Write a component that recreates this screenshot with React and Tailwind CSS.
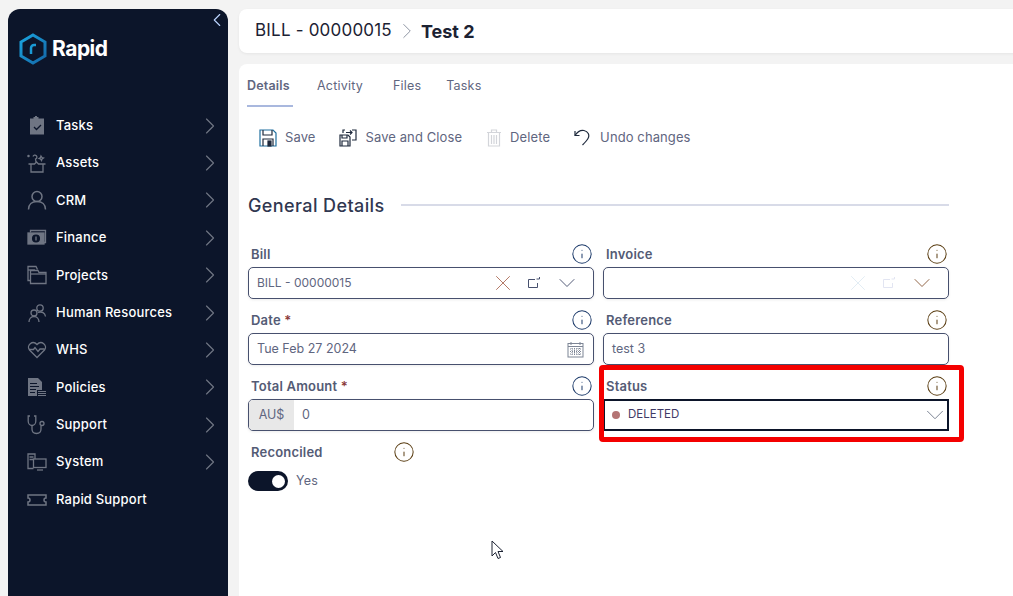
import { ChevronRight, ChevronLeft, ChevronDown, X, Info } from "lucide-react"

const FONT = "font-['Inter','Open_Sans',sans-serif]"

// sidebar icons, all drawn on a 20x20 box
const stroke = { fill: "none", stroke: "#6f7583", strokeWidth: 1.3 }
const icons = {
  tasks: (
    <svg width="20" height="20" viewBox="0 0 20 20">
      <path d="M3 3h3.5V1.5h1.5V0.5h2V1.5h1.5V3H17V19H3Z" fill="#6f7583" transform="translate(0 -0.5)" />
      <path d="M7 11l2.5 2.5L14 9" fill="none" stroke="#0c152a" strokeWidth="1.3" />
    </svg>
  ),
  assets: (
    <svg width="20" height="20" viewBox="0 0 20 20" {...stroke}>
      <path d="M4 11v8h12v-8M1.5 11h6l2-2 2 2h7" />
      <path d="M6 3.5a2 2 0 1 1 2.5 2.5L9 9M14 3l1 1.5 1.5.5-1.5 1-.5 1.5-1-1.5-1.5-.5 1.5-1Z" />
      <circle cx="1.5" cy="3" r=".6" />
    </svg>
  ),
  crm: (
    <svg width="20" height="20" viewBox="0 0 20 20" fill="none" stroke="#6f7583" strokeWidth="1.5">
      <circle cx="10" cy="6.5" r="5" />
      <path d="M1.5 19.5c0-5 3.5-8 8.5-8s8.5 3 8.5 8" />
    </svg>
  ),
  finance: (
    <svg width="20" height="20" viewBox="0 0 20 20" {...stroke}>
      <path d="M3.5 4.5V2.5h15v12h-2" />
      <rect x="1" y="5" width="16" height="11" fill="#6f7583" />
      <ellipse cx="9" cy="10.5" rx="3.4" ry="3.4" fill="#0c152a" stroke="#0c152a" />
      <path d="M9 8.5v4" stroke="#6f7583" />
    </svg>
  ),
  projects: (
    <svg width="20" height="20" viewBox="0 0 20 20" {...stroke}>
      <path d="M3 15.5H1V1.5h8l1.5 3" />
      <path d="M1 5h7" />
      <path d="M3.5 7.5V18.5H19V7.5H12l-1-2H3.5Z" />
      <path d="M3.5 9H19" />
    </svg>
  ),
  hr: (
    <svg width="20" height="20" viewBox="0 0 20 20" {...stroke}>
      <circle cx="7" cy="10" r="3" />
      <path d="M2 19c0-3 2-5.500 5-5.500S12 16 12 19" />
      <circle cx="13" cy="5" r="3.200" />
      <path d="M11 9.500c4-1.500 7 .5 7.500 4" />
    </svg>
  ),
  whs: (
    <svg width="20" height="20" viewBox="0 0 20 20" {...stroke}>
      <path d="M10 17.500 2.500 10C-1 5.500 5.500-.5 10 4.500c4.500-5 11 1 7.500 5.500Z" />
      <path d="M2 9.500h4.500l1.500-2 3 4 2-2.500h4.500" />
    </svg>
  ),
  policies: (
    <svg width="20" height="20" viewBox="0 0 20 20">
      <path d="M1 1h10l4 4v8h-5v6H1Z" fill="#6f7583" />
      <path d="M3 6.500h7M3 9.500h9M3 12.500h6M3 15.500h5" stroke="#0c152a" strokeWidth="1" />
      <path d="M11 14.500h8M11 16.500h8M11 18.500h8" stroke="#6f7583" strokeWidth="1.200" />
    </svg>
  ),
  support: (
    <svg width="20" height="20" viewBox="0 0 20 20" {...stroke}>
      <path d="M3 1H1.200v5c0 3 2 4.500 3.800 4.500S8.800 9 8.800 6V1H7" />
      <path d="M5 10.500v3.500c0 3 2 4.500 4.500 4.500s4.500-1.500 4.500-4.500v-3" />
      <circle cx="15" cy="8.500" r="2" />
    </svg>
  ),
  system: (
    <svg width="20" height="20" viewBox="0 0 20 20" {...stroke}>
      <path d="M6.500 16.500H1V2h7v5" />
      <path d="M2.500 5h4M2.500 7.500h4" />
      <rect x="6.500" y="7" width="12.500" height="8.500" />
      <path d="M10 18h6" />
    </svg>
  ),
  ticket: (
    <svg width="20" height="20" viewBox="0 0 20 20" {...stroke}>
      <path d="M1 5h18v3a2 2 0 0 0 0 4v3H1v-3a2 2 0 0 0 0-4Z" strokeWidth="1.500" />
    </svg>
  ),
}

const menu = [
  ["Tasks", "tasks"],
  ["Assets", "assets"],
  ["CRM", "crm"],
  ["Finance", "finance"],
  ["Projects", "projects"],
  ["Human Resources", "hr"],
  ["WHS", "whs"],
  ["Policies", "policies"],
  ["Support", "support"],
  ["System", "system"],
  ["Rapid Support", "ticket"],
]

function Logo() {
  return (
    <div className="flex items-center pl-[11px] h-[32px]">
      <svg width="28" height="32" viewBox="0 0 28 32">
        <defs>
          <linearGradient id="hex" x1="0" y1="0" x2="1" y2="1">
            <stop offset="0" stopColor="#1aa5e0" />
            <stop offset="1" stopColor="#1467a8" />
          </linearGradient>
        </defs>
        <path d="M14 2 26 9V23L14 30 2 23V9Z" fill="none" stroke="url(#hex)" strokeWidth="3" />
        <path d="M12 21v-6a3 3 0 0 1 3-3h2" fill="none" stroke="#1a9ad6" strokeWidth="2.500" />
      </svg>
      <span className="ml-[5px] text-[21px] font-bold text-white tracking-[-0.5px]">Rapid</span>
    </div>
  )
}

function Sidebar() {
  return (
    <aside className="w-[220px] shrink-0 bg-[#0c152a] rounded-t-[12px] flex flex-col">
      <div className="flex justify-end h-[24px]">
        <ChevronLeft size={22} color="#bcd4ff" strokeWidth={1.2} />
      </div>
      <Logo />
      <nav className="mt-[42px] flex flex-col">
        {menu.map(([label, icon], i) => (
          <div key={label} className="h-[37.4px] flex items-center pl-[19px] pr-[4px]">
            <span className="w-[20px] h-[20px] shrink-0">{icons[icon]}</span>
            <span className="ml-[9px] flex-1 text-[13px] font-medium text-white">{label}</span>
            {i < menu.length - 1 && <ChevronRight size={28} color="#6f7583" strokeWidth={1} />}
          </div>
        ))}
      </nav>
    </aside>
  )
}

function ToolButton({ icon, label }) {
  return (
    <div className="flex items-center gap-[8px] text-[13px] tracking-[0.1px] text-[#5f6680]">
      {icon}
      <span>{label}</span>
    </div>
  )
}

function Field({ label, required, infoColor, children }) {
  return (
    <div>
      <div className="h-[34px] flex items-center justify-between pt-[8px] pl-[3px] pr-[1px]">
        <span className="text-[13px] font-semibold text-[#545b75] leading-[18px]">
          {label}
          {required && <span className="text-[#8a3a3a]"> *</span>}
        </span>
        <Info size={22} color={infoColor} strokeWidth={1.1} />
      </div>
      {children}
    </div>
  )
}

function Box({ children, className = "" }) {
  return (
    <div className={`h-[32px] flex items-center rounded-[5px] border border-[#47506e] bg-white text-[12.500px] tracking-normal text-[#5f6680] shadow-[0_1px_3px_rgba(0,0,0,0.08)] ${className}`}>
      {children}
    </div>
  )
}

function ExternalIcon({ color }) {
  return (
    <svg width="14" height="14" viewBox="0 0 14 14" fill="none" stroke={color} strokeWidth="1">
      <path d="M8 3.500H1.500v8h9V7" />
      <path d="M9.500 3h3M12.500 3V1" />
    </svg>
  )
}

function CalendarIcon() {
  return (
    <svg width="17" height="17" viewBox="0 0 17 17" fill="none" stroke="#7d8595" strokeWidth="1">
      <rect x="1" y="2.500" width="15" height="13.500" />
      <path d="M1 5.500h15M4 1v3M13 1v3" />
      <path d="M3 8h11M3 10.500h11M3 13h11M5 7v7.500M7.500 7v7.500M10 7v7.500M12.500 7v7.500" strokeDasharray="1 1" />
    </svg>
  )
}

function LookupIcons({ xColor, linkColor, arrowColor }) {
  return (
    <>
      <X size={26} color={xColor} strokeWidth={0.8} />
      <span className="ml-[11px]"><ExternalIcon color={linkColor} /></span>
      <span className="ml-[12px]"><ChevronDown size={28} color={arrowColor} strokeWidth={0.8} /></span>
    </>
  )
}

function Toolbar() {
  return (
    <div className="mt-[19px] ml-[20px] flex items-center h-[24px] gap-[24px]">
      <ToolButton
        label="Save"
        icon={
          <svg width="18" height="18" viewBox="0 0 18 18" fill="none" stroke="#1f2a3d" strokeWidth="1.200">
            <path d="M1 1h13l3 3v13H1Z" stroke="#1f6f9f" />
            <path d="M4 1v5h9V1M4 17v-7h10v7" />
            <rect x="9" y="12" width="3" height="5" fill="#1f2a3d" />
          </svg>
        }
      />
      <ToolButton
        label="Save and Close"
        icon={
          <svg width="18" height="18" viewBox="0 0 18 18" fill="none" stroke="#1f2a3d" strokeWidth="1.200">
            <path d="M1 6h8l2 2v9H1Z" />
            <path d="M3 6v3h5V6M3 17v-5h6v5" />
            <path d="M4 4V1h2M13 1h4v10h-4M7 3.500h6M11 1.500l2 2-2 2" />
          </svg>
        }
      />
      <ToolButton
        label="Delete"
        icon={
          <svg width="16" height="18" viewBox="0 0 16 18" fill="none" stroke="#d3d5da" strokeWidth="1.200">
            <path d="M1 3.500h14M5.500 3V1h5v2M2.500 3.500V17h11V3.500" />
            <path d="M5.500 6v9M8 6v9M10.500 6v9" />
          </svg>
        }
      />
      <ToolButton
        label="Undo changes"
        icon={
          <svg width="18" height="18" viewBox="0 0 18 18" fill="none" stroke="#1f2a3d" strokeWidth="1.200">
            <path d="M1 6.500C4 2 7.500 1 10 1.500c4 .8 6 4.500 4 8-1 1.800-3 4-5.500 6.500" />
            <path d="M1 2v4.500h4.500" />
          </svg>
        }
      />
    </div>
  )
}

function Form() {
  return (
    <div className="mt-[15px] ml-[9px] w-[701px] grid grid-cols-2 gap-x-[9px]">
      <Field label="Bill" infoColor="#1c3a6a">
        <Box className="pl-[8px] pr-[12px]">
          <span className="flex-1 text-[12px]">BILL - 00000015</span>
          <LookupIcons xColor="#a8654f" linkColor="#47506e" arrowColor="#47506e" />
        </Box>
      </Field>
      <Field label="Invoice" infoColor="#5a3d12">
        <Box className="pl-[8px] pr-[12px]">
          <span className="flex-1" />
          <LookupIcons xColor="#dfeaf2" linkColor="#e2e5f2" arrowColor="#8a5a3a" />
        </Box>
      </Field>
      <Field label="Date" required infoColor="#1c3a6a">
        <Box className="pl-[8px] pr-[9px]">
          <span className="flex-1">Tue Feb 27 2024</span>
          <CalendarIcon />
        </Box>
      </Field>
      <Field label="Reference" infoColor="#5a3d12">
        <Box className="pl-[8px]">test 3</Box>
      </Field>
      <Field label="Total Amount" required infoColor="#1c3a6a">
        <Box className="overflow-hidden">
          <span className="w-[45px] h-full flex items-center justify-center bg-[#e8e8e8]">AU$</span>
          <span className="ml-[8px]">0</span>
        </Box>
      </Field>
      <div className="relative">
        <Field label="Status" infoColor="#5a3d12">
          <div className="h-[32px] flex items-center border-2 border-[#0c152a] bg-white pl-[7px] text-[11.500px] tracking-normal text-[#3f3a66]">
            <span className="w-[8px] h-[8px] rounded-full bg-[#b47474]" />
            <span className="ml-[8px] flex-1">DELETED</span>
            <ChevronDown size={30} color="#7d8595" strokeWidth={0.8} className="-mr-[3px]" />
          </div>
        </Field>
        {/* red annotation round the status field */}
        <div className="absolute -left-[4px] top-0 w-[365px] h-[77px] rounded-[4px] border-[5px] border-[#f40000]" />
      </div>
      <div className="col-span-2 w-[168px]">
        <Field label="Reconciled" infoColor="#5a3d12" />
      </div>
      <div className="col-span-2 mt-[6px] flex items-center gap-[8px]">
        <div className="w-[40px] h-[20px] rounded-full bg-[#0c152a] flex items-center justify-end pr-[3px]">
          <span className="w-[13px] h-[13px] rounded-full bg-white" />
        </div>
        <span className="text-[12.500px] text-[#5f6680]">Yes</span>
      </div>
    </div>
  )
}

export default function App() {
  return (
    <div className={`relative h-[596px] w-[1013px] overflow-hidden bg-[#f3f3f3] pl-[8px] pt-[9px] flex tracking-[0.2px] ${FONT}`}>
      <Sidebar />
      <main className="ml-[11px] w-[790px] shrink-0 flex flex-col">
        <header className="h-[44px] shrink-0 bg-white rounded-l-[8px] flex items-center pl-[16px] shadow-[0_1px_3px_rgba(0,0,0,0.06)]">
          <span className="text-[17px] text-[#1c2233]">BILL - 00000015</span>
          <ChevronRight size={26} color="#7d8595" strokeWidth={0.8} className="ml-[2px] mr-[1px]" />
          <span className="text-[18px] font-bold tracking-normal text-[#1c2233]">Test 2</span>
        </header>
        <section className="mt-[11px] flex-1 bg-white rounded-tl-[8px] flex flex-col">
          <div className="ml-[8px] flex h-[43px] items-end text-[12.500px] text-[#5f6680]">
            <div className="w-[46px] h-[43px] pt-[13px] font-semibold border-b-2 border-[#a9b8de]">Details</div>
            <div className="ml-[24px] h-[43px] pt-[13px]">Activity</div>
            <div className="ml-[30px] h-[43px] pt-[13px]">Files</div>
            <div className="ml-[25px] h-[43px] pt-[13px]">Tasks</div>
          </div>
          <Toolbar />
          <div className="mt-[42px] ml-[9px] w-[701px] flex items-center h-[26px]">
            <h2 className="text-[18px] font-medium tracking-[0.4px] text-[#303750]">General Details</h2>
            <div className="ml-[16px] flex-1 h-[2px] bg-[#d8dbe8]" />
          </div>
          <Form />
        </section>
      </main>
      {/* mouse pointer caught in the screenshot */}
      <svg className="absolute left-[491px] top-[540px]" width="13" height="20" viewBox="0 0 13 20">
        <path d="M1 1v15l3.500-3.500 2.500 6 2.500-1-2.500-6H12Z" fill="white" stroke="#1c2233" strokeWidth="1" />
      </svg>
    </div>
  )
}
